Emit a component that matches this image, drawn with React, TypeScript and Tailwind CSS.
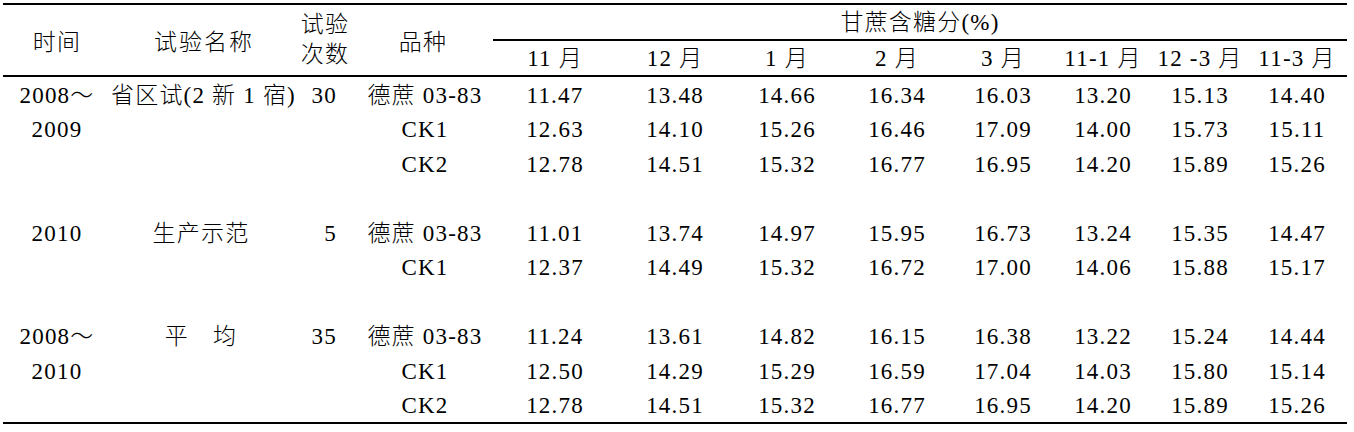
import React from "react";

const cols = "grid grid-cols-[108px_186px_56px_140px_124px_116px_108px_112px_100px_100px_94px_100px] grid-rows-[34.5px]";

const months = ["11 月", "12 月", "1 月", "2 月", "3 月", "11-1 月", "12 -3 月", "11-3 月"];

type Row = { time?: string; name?: string; count?: string; kind?: string; vals?: string[] };

const rows: Row[] = [
    { time: "2008～", name: "省区试(2 新 1 宿)", count: "30", kind: "德蔗 03-83", vals: ["11.47", "13.48", "14.66", "16.34", "16.03", "13.20", "15.13", "14.40"] },
    { time: "2009", kind: "CK1", vals: ["12.63", "14.10", "15.26", "16.46", "17.09", "14.00", "15.73", "15.11"] },
    { kind: "CK2", vals: ["12.78", "14.51", "15.32", "16.77", "16.95", "14.20", "15.89", "15.26"] },
    {},
    { time: "2010", name: "生产示范", count: "5", kind: "德蔗 03-83", vals: ["11.01", "13.74", "14.97", "15.95", "16.73", "13.24", "15.35", "14.47"] },
    { kind: "CK1", vals: ["12.37", "14.49", "15.32", "16.72", "17.00", "14.06", "15.88", "15.17"] },
    {},
    { time: "2008～", name: "平　均", count: "35", kind: "德蔗 03-83", vals: ["11.24", "13.61", "14.82", "16.15", "16.38", "13.22", "15.24", "14.44"] },
    { time: "2010", kind: "CK1", vals: ["12.50", "14.29", "15.29", "16.59", "17.04", "14.03", "15.80", "15.14"] },
    { kind: "CK2", vals: ["12.78", "14.51", "15.32", "16.77", "16.95", "14.20", "15.89", "15.26"] },
];

export default function App() {
    return (
        <div className="w-[1354px] h-[432px] bg-white text-black font-['Liberation_Serif','Noto_Sans_CJK_SC',serif] font-light text-[23px] tracking-[1.2px] leading-none whitespace-nowrap overflow-hidden">
            <div className="ml-[3px] pt-[3px] w-[1344px]">
                <div className="border-t-2 border-b-2 border-black">
                    {/* header */}
                    <div className={`${cols} grid-rows-[36px_34px] border-b-2 border-black`}>
                        <div className="row-span-2 flex items-center justify-center pt-1">时间</div>
                        <div className="row-span-2 flex items-center justify-center pt-1 tracking-[2px]">试验名称</div>
                        <div className="row-span-2 flex flex-col items-center justify-center leading-[30px]">
                            <span>试验</span>
                            <span>次数</span>
                        </div>
                        <div className="row-span-2 flex items-center justify-center pt-1">品种</div>
                        <div className="col-span-8 flex items-center justify-center border-b-2 border-black">甘蔗含糖分(%)</div>
                        {months.map((m) => (
                            <div key={m} className="flex items-center justify-center">{m}</div>
                        ))}
                    </div>

                    {/* body */}
                    {rows.map((r, i) => (
                        <div key={i} className={`${cols} h-[34.5px] items-center pt-[1px]`}>
                            <div className="text-center">{r.time}</div>
                            <div className="text-center pr-[6px]">{r.name}</div>
                            <div className="text-right pr-[16px]">{r.count}</div>
                            <div className="text-center pl-[4px]">{r.kind}</div>
                            {(r.vals ?? []).map((v, j) => (
                                <div key={j} className="text-center">{v}</div>
                            ))}
                        </div>
                    ))}
                </div>
            </div>
        </div>
    );
}
